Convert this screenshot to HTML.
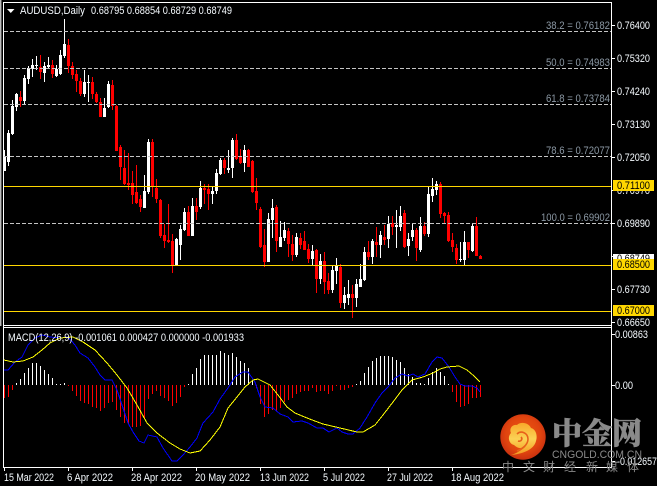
<!DOCTYPE html>
<html>
<head>
<meta charset="utf-8">
<style>
html,body{margin:0;padding:0;background:#000;width:657px;height:486px;overflow:hidden}
svg{display:block}
text{font-family:"Liberation Sans","Noto Sans CJK SC",sans-serif;font-size:11px;fill:#f6fbff}
.fib{fill:#8b98a4}
.k{fill:#000}
</style>
</head>
<body>
<svg width="657" height="486" viewBox="0 0 657 486" xmlns="http://www.w3.org/2000/svg">
<defs>
<radialGradient id="g" cx="50%" cy="45%" r="55%"><stop offset="0" stop-color="#ee5a12"/><stop offset="0.7" stop-color="#e0440f"/><stop offset="1" stop-color="#c9300f"/></radialGradient>
<linearGradient id="y" x1="0" y1="0" x2="0" y2="1"><stop offset="0" stop-color="#f8a92a"/><stop offset="0.5" stop-color="#fbd255"/><stop offset="1" stop-color="#f49a20"/></linearGradient>
</defs>
<rect width="657" height="486" fill="#000"/>
<rect x="0" y="0" width="1" height="326" fill="#bbb"/>
<rect x="1" y="0" width="1" height="326" fill="#555"/>

<g shape-rendering="crispEdges" fill="none">
<!-- red wicks -->
<path stroke="#f00" stroke-width="1" d="M20.5 91V107M40.5 55V79M52.5 60V78M68.5 39V73M72.5 62V79M76.5 70V92M80.5 78V96M92.5 77V99M96.5 92V103M100.5 98V117M112.5 80V110M116.5 105V151M120.5 145V180M124.5 150V185M128.5 153V190M132.5 171V204M136.5 165V204M140.5 195V212M152.5 139V197M156.5 179V203M160.5 199V238M164.5 224V248M168.5 204V243M172.5 234V273M188.5 206V236M196.5 198V220M204.5 184V204M208.5 184V210M224.5 158V174M236.5 134V160M240.5 149V164M248.5 149V167M252.5 160V193M256.5 178V210M260.5 207V248M264.5 229V267M276.5 205V252M288.5 228V257M292.5 235V261M300.5 233V249M304.5 231V250M308.5 244V263M316.5 249V293M324.5 252V294M328.5 273V294M340.5 264V308M352.5 285V318M368.5 241V260M376.5 227V257M384.5 225V245M392.5 216V235M404.5 210V248M416.5 228V261M424.5 222V236M440.5 182V218M444.5 212V223M448.5 212V242M452.5 233V252M456.5 244V264M468.5 242V258M476.5 217V256M480.5 255V259"/>
<!-- red bodies -->
<path stroke="#f00" stroke-width="3" d="M20.5 97V101M40.5 67V72M52.5 65V74M68.5 45V66M72.5 66V75M76.5 74V81M80.5 81V94M92.5 82V94M96.5 94V102M100.5 102V117M112.5 85V106M116.5 106V151M120.5 147V167M124.5 168V184M128.5 183V185M132.5 183V195M136.5 192V203M140.5 199V207M152.5 142V187M156.5 188V199M160.5 200V236M164.5 235V241M168.5 240V242M172.5 241V265M188.5 212V236M196.5 206V212M204.5 188V190M208.5 189V194M224.5 160V168M236.5 140V159M240.5 157V163M248.5 150V167M252.5 161V192M256.5 191V203M260.5 209V247M264.5 245V262M276.5 207V241M288.5 231V244M292.5 244V255M300.5 238V245M304.5 241V250M308.5 249V259M316.5 250V279M324.5 261V282M328.5 281V290M340.5 267V303M352.5 294V298M368.5 252V257M376.5 242V245M384.5 237V240M392.5 223V227M404.5 213V247M416.5 230V248M424.5 226V234M440.5 184V214M444.5 213V216M448.5 215V241M452.5 240V247M456.5 248V260M468.5 242V250M476.5 226V256M480.5 256V259"/>
<!-- white wicks -->
<path stroke="#fff" stroke-width="1" d="M4.5 150V171M8.5 130V166M12.5 100V135M16.5 93V111M24.5 75V105M28.5 66V84M32.5 59V77M36.5 56V70M44.5 62V82M48.5 57V68M56.5 65V77M60.5 50V75M64.5 19V58M84.5 70V97M88.5 75V102M104.5 98V117M108.5 81V108M144.5 175V208M148.5 139V194M176.5 238V265M180.5 225V260M184.5 208V231M192.5 198V236M200.5 181V209M212.5 187V204M216.5 169V194M220.5 158V175M228.5 150V173M232.5 138V178M244.5 145V172M268.5 213V262M272.5 199V238M280.5 221V247M284.5 222V241M296.5 233V257M312.5 245V265M320.5 254V284M332.5 266V293M336.5 258V284M344.5 287V309M348.5 280V305M356.5 279V307M360.5 264V287M364.5 247V281M372.5 239V264M380.5 231V258M388.5 216V248M396.5 210V248M400.5 206V231M408.5 233V256M412.5 224V241M420.5 217V252M428.5 187V237M432.5 178V202M436.5 181V195M460.5 242V262M464.5 231V265M472.5 223V252"/>
<!-- white bodies -->
<path stroke="#fff" stroke-width="3" d="M4.5 156V171M8.5 133V162M12.5 106V134M16.5 94V107M24.5 78V101M28.5 68V79M32.5 65V69M36.5 65V66M44.5 66V73M48.5 65V67M56.5 69V76M60.5 55V74M64.5 44V56M84.5 82V94M88.5 82V83M104.5 108V117M108.5 84V107M144.5 191V208M148.5 142V192M176.5 239V265M180.5 229V245M184.5 212V230M192.5 206V236M200.5 188V207M212.5 191V194M216.5 173V191M220.5 160V174M228.5 168V170M232.5 140V168M244.5 150V163M268.5 219V262M272.5 208V220M280.5 237V247M284.5 230V238M296.5 237V255M312.5 251V259M320.5 261V279M332.5 270V290M336.5 266V271M344.5 295V303M348.5 294V298M356.5 284V298M360.5 279V287M364.5 252V280M372.5 241V257M380.5 235V245M388.5 224V239M396.5 225V227M400.5 216V227M408.5 239V246M412.5 230V237M420.5 226V250M428.5 194V234M432.5 189V196M436.5 184V190M460.5 259V260M464.5 242V260M472.5 226V251"/>

<!-- levels -->
<path stroke="#c4c4c4" stroke-dasharray="4 2" d="M4 31.5H611M4 68.5H611M4 104.5H611M4 156.5H611M4 223.5H611"/>
<path stroke="#ffd700" d="M4 186.5H611M4 265.5H611M4 311.5H611"/>

<!-- histogram -->
<path stroke="#f00" d="M4.5 385V398M8.5 385V397M12.5 385V390M68.5 385V386M72.5 385V391M76.5 385V396M80.5 385V401M84.5 385V403M88.5 385V404M92.5 385V407M96.5 385V408M100.5 385V411M104.5 385V408M108.5 385V403M112.5 385V402M116.5 385V410M120.5 385V417M124.5 385V423M128.5 385V424M132.5 385V427M136.5 385V427M140.5 385V426M144.5 385V418M148.5 385V399M152.5 385V394M156.5 385V391M160.5 385V396M164.5 385V398M168.5 385V401M172.5 385V406M176.5 385V403M180.5 385V397M184.5 385V387M256.5 385V388M260.5 385V404M264.5 385V417M268.5 385V414M272.5 385V410M276.5 385V411M280.5 385V408M284.5 385V402M288.5 385V400M292.5 385V398M296.5 385V394M300.5 385V392M304.5 385V391M308.5 385V391M312.5 385V388M316.5 385V392M320.5 385V391M324.5 385V391M328.5 385V394M332.5 385V391M336.5 385V386M340.5 385V390M344.5 385V390M348.5 385V388M352.5 385V387M452.5 385V392M456.5 385V402M460.5 385V407M464.5 385V406M468.5 385V404M472.5 385V398M476.5 385V398M480.5 385V397"/>
<path stroke="#fff" d="M16.5 383V385M20.5 379V385M24.5 373V385M28.5 368V385M32.5 363V385M36.5 363V385M40.5 366V385M44.5 370V385M48.5 374V385M52.5 378V385M56.5 384V385M60.5 384V385M64.5 383V385M188.5 384V385M192.5 374V385M196.5 368V385M200.5 359V385M204.5 355V385M208.5 355V385M212.5 355V385M216.5 355V385M220.5 351V385M224.5 353V385M228.5 355V385M232.5 353V385M236.5 357V385M240.5 361V385M244.5 363V385M248.5 368V385M252.5 380V385M356.5 384V385M360.5 381V385M364.5 373V385M368.5 367V385M372.5 361V385M376.5 358V385M380.5 356V385M384.5 356V385M388.5 356V385M392.5 357V385M396.5 360V385M400.5 362V385M404.5 368V385M408.5 374V385M412.5 377V385M416.5 383V385M420.5 383V385M424.5 384V385M428.5 378V385M432.5 372V385M436.5 368V385M440.5 372V385M444.5 376V385M448.5 384V385"/>

<!-- frame -->
<path stroke="#fff" d="M3.5 2V468M3 2.5H612M3 325.5H612M3 327.5H612M3 467.5H612M611.5 2V468"/>
<path stroke="#fff" d="M611 25.5H615M611 58.5H615M611 91.5H615M611 124.5H615M611 157.5H615M611 190.5H615M611 223.5H615M611 256.5H615M611 289.5H615M611 322.5H615M611 334.5H615M611 385.5H615M611 461.5H615M4.5 467V471M68.5 467V471M132.5 467V471M196.5 467V471M260.5 467V471M324.5 467V471M388.5 467V471M452.5 467V471"/>

<!-- MACD lines -->
<polyline stroke="#00f" stroke-width="1" points="4,370 8,370 15,362 22,357 28,345 35,338 42,335 50,337 60,338 68,337 75,345 80,353 88,358 95,367 100,375 105,380 112,380 117,390 122,405 128,423 133,432 139,441 144,443 148,435 157,437 163,448 172,461 177,461 183,455 190,447 197,438 203,423 213,412 220,399 228,388 235,377 243,372 248,372 255,382 260,397 265,407 273,408 280,414 288,417 293,422 302,421 308,423 317,428 323,428 329,432 337,428 342,432 348,434 353,434 360,428 367,417 375,403 382,393 388,387 395,378 402,374 408,376 413,374 418,377 425,374 432,362 437,357 442,358 449,367 455,377 460,384 465,386 472,386 477,388 480,392"/>
<polyline stroke="#ff0" stroke-width="1" points="4,360 13,362 23,361 33,357 42,350 50,343 60,338 73,337 83,342 95,350 107,363 117,375 127,388 137,405 147,423 157,433 170,443 180,449 190,453 200,451 210,440 220,427 228,408 237,397 245,387 253,380 258,379 270,385 278,395 287,407 295,413 307,418 323,424 340,428 357,432 363,432 375,425 383,415 393,402 402,390 412,380 423,377 433,373 440,369 447,367 459,366 467,370 474,376 480,382"/>
</g>

<!-- header -->
<path d="M7 9H14.5L10.8 13Z" fill="#fff"/>
<text x="20" y="14" textLength="65" lengthAdjust="spacingAndGlyphs">AUDUSD,Daily</text>
<text x="91" y="14" textLength="141" lengthAdjust="spacingAndGlyphs">0.68795 0.68854 0.68729 0.68749</text>
<text x="8" y="341" textLength="236" lengthAdjust="spacingAndGlyphs">MACD(12,26,9) -0.001061 0.000427 0.000000 -0.001933</text>

<!-- fib labels -->
<text class="fib" x="546" y="29" textLength="64" lengthAdjust="spacingAndGlyphs">38.2 = 0.76182</text>
<text class="fib" x="546" y="66" textLength="64" lengthAdjust="spacingAndGlyphs">50.0 = 0.74983</text>
<text class="fib" x="546" y="102" textLength="64" lengthAdjust="spacingAndGlyphs">61.8 = 0.73784</text>
<text class="fib" x="546" y="154" textLength="64" lengthAdjust="spacingAndGlyphs">78.6 = 0.72077</text>
<text class="fib" x="541" y="221" textLength="69" lengthAdjust="spacingAndGlyphs">100.0 = 0.69902</text>

<!-- axis labels -->
<g>
<text x="617" y="29" textLength="33" lengthAdjust="spacingAndGlyphs">0.76400</text>
<text x="617" y="62" textLength="33" lengthAdjust="spacingAndGlyphs">0.75320</text>
<text x="617" y="95" textLength="33" lengthAdjust="spacingAndGlyphs">0.74240</text>
<text x="617" y="128" textLength="33" lengthAdjust="spacingAndGlyphs">0.73130</text>
<text x="617" y="161" textLength="33" lengthAdjust="spacingAndGlyphs">0.72050</text>
<text x="617" y="194" textLength="33" lengthAdjust="spacingAndGlyphs">0.70970</text>
<text x="617" y="227" textLength="33" lengthAdjust="spacingAndGlyphs">0.69890</text>
<text x="617" y="293" textLength="33" lengthAdjust="spacingAndGlyphs">0.67730</text>
<text x="617" y="326" textLength="33" lengthAdjust="spacingAndGlyphs">0.66650</text>
<text x="615" y="338" textLength="33" lengthAdjust="spacingAndGlyphs">0.00863</text>
<text x="615" y="389" textLength="18" lengthAdjust="spacingAndGlyphs">0.00</text>
<text x="617" y="465" textLength="40" lengthAdjust="spacingAndGlyphs">-0.012657</text>
</g>
<rect x="613" y="254" width="41" height="11" fill="#fff"/>
<text class="k" x="617" y="262" textLength="33" lengthAdjust="spacingAndGlyphs">0.68749</text>
<rect x="613" y="180" width="41" height="11" fill="#ffd700"/>
<text class="k" x="617" y="189" textLength="33" lengthAdjust="spacingAndGlyphs">0.71100</text>
<rect x="613" y="259" width="41" height="11" fill="#ffd700"/>
<text class="k" x="617" y="268" textLength="33" lengthAdjust="spacingAndGlyphs">0.68500</text>
<rect x="613" y="305" width="41" height="11" fill="#ffd700"/>
<text class="k" x="617" y="314" textLength="33" lengthAdjust="spacingAndGlyphs">0.67000</text>

<!-- time labels -->
<text x="4" y="481" textLength="50" lengthAdjust="spacingAndGlyphs">15 Mar 2022</text>
<text x="67" y="481" textLength="46" lengthAdjust="spacingAndGlyphs">6 Apr 2022</text>
<text x="131" y="481" textLength="51" lengthAdjust="spacingAndGlyphs">28 Apr 2022</text>
<text x="195" y="481" textLength="55" lengthAdjust="spacingAndGlyphs">20 May 2022</text>
<text x="260" y="481" textLength="49" lengthAdjust="spacingAndGlyphs">13 Jun 2022</text>
<text x="323" y="481" textLength="42" lengthAdjust="spacingAndGlyphs">5 Jul 2022</text>
<text x="387" y="481" textLength="46" lengthAdjust="spacingAndGlyphs">27 Jul 2022</text>
<text x="451" y="481" textLength="53" lengthAdjust="spacingAndGlyphs">18 Aug 2022</text>

<!-- logo -->
<circle cx="523" cy="437" r="22.7" fill="url(#g)"/>
<path fill="url(#y)" d="M511 455C522 454 534 450 536 441C538 434 535 429 531 428C529 423 521 421 517 425C512 424 509 429 511 433C507 437 509 444 514 445C518 449 523 449 526 446C522 450 517 453 511 455Z"/>
<path fill="none" stroke="#e8601a" stroke-width="1.6" d="M517 434C521 430 528 433 528 439C528 445 522 449 517 451M518 441C521 442 523 439 521 437"/>
<text x="552" y="444" stroke="#8a8a8a" stroke-width="0.5" style="font-family:'Noto Serif CJK SC','Noto Sans CJK SC',sans-serif;font-size:30px;font-weight:900;fill:#8a8a8a">中金网</text>
<text x="552" y="458" textLength="90" lengthAdjust="spacingAndGlyphs" style="font-size:11px;fill:#8a8a8a">CNGOLD.COM.CN</text>
<text y="471" x="502 523 543 564 586 606 627" style="font-family:'Noto Sans CJK SC',sans-serif;font-size:12px;fill:#8a8a8a">中文财经新媒体</text>
</svg>
</body>
</html>
